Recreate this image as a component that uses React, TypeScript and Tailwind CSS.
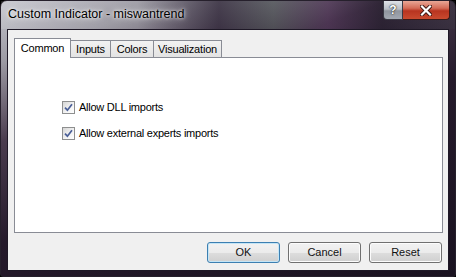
import React from 'react'

const TABS = ['Common', 'Inputs', 'Colors', 'Visualization']
const TAB_WIDTHS = ['w-[57px]', 'w-[41px]', 'w-[44px]', 'w-[69px]']

function CheckRow({ label }: { label: string }) {
  return (
    <div className="flex items-center h-[13px]">
      <span className="w-[13px] h-[13px] border border-[#8e8f8f] bg-[linear-gradient(135deg,#d6d6d6_0%,#f4f4f4_60%,#ffffff_100%)] flex items-center justify-center">
        <svg width="9" height="9" viewBox="0 0 9 9">
          <path d="M1 4.6 L3.4 7.2 L8 1.2" stroke="#4a5f97" strokeWidth="1.7" fill="none" />
        </svg>
      </span>
      <span className="ml-[4px] text-[11px] tracking-[-0.25px] text-black leading-none">{label}</span>
    </div>
  )
}

function DlgButton({ label, primary }: { label: string; primary?: boolean }) {
  return (
    <button
      className={
        'w-[73px] h-[21px] rounded-[3px] text-[11px] text-[#111] bg-[linear-gradient(#f2f2f2_0%,#ebebeb_50%,#dddddd_51%,#cfcfcf_100%)] ' +
        (primary
          ? 'border border-[#3c7fb1] shadow-[inset_0_0_0_1px_#c4e5f6]'
          : 'border border-[#707070] shadow-[inset_0_0_0_1px_#fcfcfc]')
      }
    >
      {label}
    </button>
  )
}

export default function App() {
  return (
    <div className="w-[456px] h-[277px] bg-black font-['Liberation_Sans',Arial,sans-serif]">
      <div className="w-full h-full rounded-t-[7px] rounded-b-[3px] border border-[#26202c] flex flex-col bg-[linear-gradient(160deg,#c4c4cc_0%,#9c9aa3_14%,#4a3c4e_32%,#251a2b_55%,#1a1220_100%)]">
        {/* Title bar */}
        <div className="h-[28px] shrink-0 flex items-start justify-between pl-[7px] pr-[5px] bg-[linear-gradient(90deg,rgba(255,255,255,0.12)_0%,rgba(255,255,255,0)_30%,rgba(20,10,30,0.55)_48%,rgba(60,80,70,0.35)_60%,rgba(80,40,90,0.35)_72%,rgba(20,15,30,0.5)_84%,rgba(60,60,70,0.3)_100%)]">
          <span className="mt-[7px] text-[12.5px] leading-none text-black [text-shadow:0_0_6px_rgba(255,255,255,0.95),0_0_3px_rgba(255,255,255,0.9)]">
            Custom Indicator - miswantrend
          </span>
          <div className="flex h-[19px]">
            <div className="w-[20px] h-full rounded-bl-[4px] border border-[#3a3a44] border-t-0 bg-[linear-gradient(#dfe2e8_0%,#b9bec6_45%,#8f959e_55%,#a3a9b2_100%)] flex items-center justify-center">
              <span className="text-[12px] font-bold text-white leading-none [text-shadow:0_0_2px_#333,0_0_1px_#000]">?</span>
            </div>
            <div className="w-[47px] h-full rounded-br-[4px] border border-l-0 border-t-0 border-[#3a1a18] bg-[linear-gradient(#e9a796_0%,#d46b57_40%,#b83420_55%,#c94a2f_100%)] flex items-center justify-center">
              <svg width="12" height="11" viewBox="0 0 12 11">
                <path d="M2 1.5 L10 9.5 M10 1.5 L2 9.5" stroke="#3a1410" strokeWidth="4" strokeLinecap="square" />
                <path d="M2 1.5 L10 9.5 M10 1.5 L2 9.5" stroke="#ffffff" strokeWidth="2.2" strokeLinecap="square" />
              </svg>
            </div>
          </div>
        </div>

        {/* Client */}
        <div className="flex-1 flex px-[6px] pb-[6px]">
          <div className="flex-1 border border-[#1e1826] bg-[#f0f0f0] flex flex-col pl-[6px] pr-[5px] pt-[8px] pb-[7px]">
            {/* Tabs */}
            <div className="h-[19px] flex items-end">
              {TABS.map((t, i) => (
                <div
                  key={t}
                  className={
                    TAB_WIDTHS[i] +
                    (i === 0
                      ? ' h-[20px] -mb-px relative z-10 bg-white border border-b-0 border-[#898c95] pt-[3px]'
                      : ' h-[17px] -ml-px bg-[linear-gradient(#f2f2f2,#e3e3e3)] border border-b-0 border-[#898c95] pt-[2px]') +
                    ' flex justify-center text-[11px] tracking-[-0.2px] leading-[12px] text-black'
                  }
                >
                  {t}
                </div>
              ))}
            </div>

            {/* Panel */}
            <div className="h-[176px] border border-[#898c95] bg-white pl-[47px] pt-[43px] flex flex-col gap-[13px]">
              <CheckRow label="Allow DLL imports" />
              <CheckRow label="Allow external experts imports" />
            </div>

            {/* Buttons */}
            <div className="mt-[9px] flex justify-end gap-[8px] pr-[1px]">
              <DlgButton label="OK" primary />
              <DlgButton label="Cancel" />
              <DlgButton label="Reset" />
            </div>
          </div>
        </div>
      </div>
    </div>
  )
}
